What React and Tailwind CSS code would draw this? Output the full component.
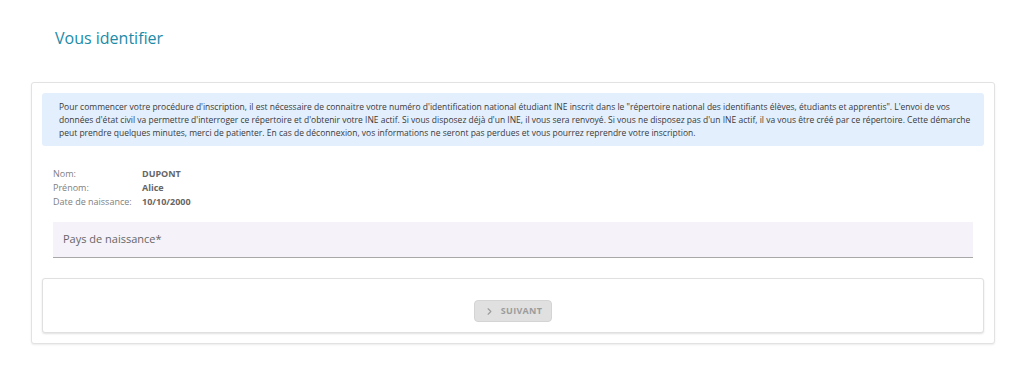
import { ChevronRight } from 'lucide-react'

const person = [
  { label: 'Nom:', value: 'DUPONT' },
  { label: 'Prénom:', value: 'Alice' },
  { label: 'Date de naissance:', value: '10/10/2000' },
]

export default function App() {
  return (
    <div className="min-h-[377px] bg-white pl-[31px] pr-[29px] font-['Open_Sans',sans-serif]">
      <h1 className="pl-6 pt-[26px] pb-[32px] text-[16px] leading-[24px] font-normal text-[#1b8ba7]">
        Vous identifier
      </h1>

      <div className="rounded-[3px] border border-[#e2e2e2] bg-white p-[10px] shadow-[0_1px_2px_rgba(0,0,0,0.08)]">
        {/* info banner */}
        <div className="rounded-[3px] bg-[#e4effd] pl-[17px] pr-[8px] pt-[7px] pb-[7px] text-[8.5px] leading-[13px] text-[#3a3a3a]">
          Pour commencer votre procédure d'inscription, il est nécessaire de connaitre votre numéro
          d'identification national étudiant INE inscrit dans le "répertoire national des identifiants
          élèves, étudiants et apprentis". L'envoi de vos données d'état civil va permettre d'interroger
          ce répertoire et d'obtenir votre INE actif. Si vous disposez déjà d'un INE, il vous sera
          renvoyé. Si vous ne disposez pas d'un INE actif, il va vous être créé par ce répertoire. Cette
          démarche peut prendre quelques minutes, merci de patienter. En cas de déconnexion, vos
          informations ne seront pas perdues et vous pourrez reprendre votre inscription.
        </div>

        <div className="px-[11px] pt-[21px] pb-[20px]">
          <div className="flex flex-col text-[9px] leading-[14px]">
            {person.map((p) => (
              <div key={p.label} className="flex">
                <span className="w-[89px] text-[#808080]">{p.label}</span>
                <span className="font-bold text-[#666]">{p.value}</span>
              </div>
            ))}
          </div>

          <div className="mt-[13px] flex h-[36px] items-center border-b border-[#a8a8a8] bg-[#f5f3f9] px-[10px] text-[11px] text-[#666]">
            Pays de naissance*
          </div>
        </div>

        {/* action bar */}
        <div className="flex justify-center rounded-[3px] border border-[#e0e0e0] bg-white pt-[21px] pb-[10px] shadow-[0_1px_2px_rgba(0,0,0,0.12)]">
          <button
            disabled
            className="flex h-[22px] w-[78px] items-center justify-center gap-[6px] rounded-[4px] border border-[#d4d4d4] bg-[#e0e0e0] text-[9px] font-bold tracking-[0.3px] text-[#9c9c9c]"
          >
            <ChevronRight size={11} strokeWidth={2.5} />
            SUIVANT
          </button>
        </div>
      </div>
    </div>
  )
}
